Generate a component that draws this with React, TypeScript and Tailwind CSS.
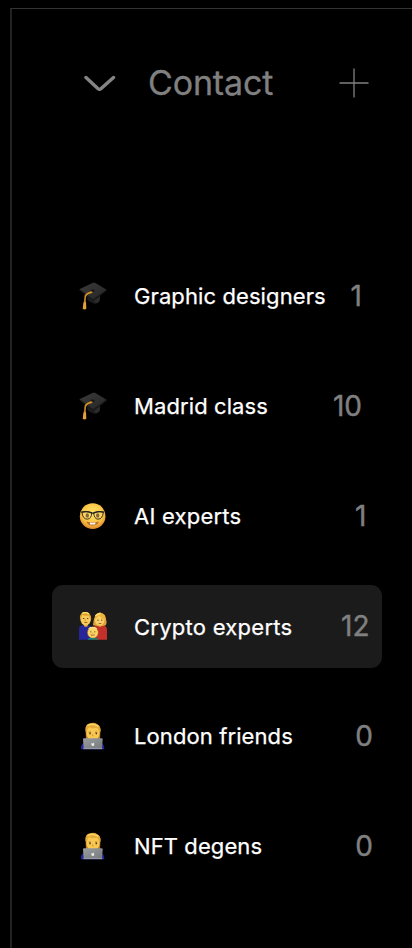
import type { ReactNode } from 'react';

function Emoji({ children }: { children: ReactNode }) {
  return (
    <svg viewBox="27 22.5 84 84" className="ml-[27px] size-7 shrink-0">
      {children}
    </svg>
  );
}

function GraduationCap() {
  return (
    <Emoji>
      <defs>
        <linearGradient id="board" x1="0" y1="0" x2="1" y2="1">
          <stop offset="0" stopColor="#3b3b3b" />
          <stop offset="1" stopColor="#252525" />
        </linearGradient>
      </defs>
      <path d="M52 62 L91 57 L90 76 Q86 90 72 87 Q59 84 52 76Z" fill="#1d1d1d" />
      <path d="M72 77 L90 66 L89 77 Q84 87 76 85Z" fill="#2c2c2c" />
      <path d="M28 44 L69 25 Q72 24 75 25 L110 46 L73 74 Q70 76 67 74Z" fill="url(#board)" />
      <path d="M28 44 L69 74 L110 46 L110 49 L72 79 L67 78 L28 47Z" fill="#191919" />
      <ellipse cx="68" cy="49" rx="6" ry="4" fill="#171717" />
      <path d="M67 53 Q50 55 46 65 L44 86" fill="none" stroke="#c88923" strokeWidth="5" />
      <path d="M64 54 Q50 57 48 66" fill="none" stroke="#efb44a" strokeWidth="2" strokeDasharray="3 2" />
      <path d="M41 82 H48 L49 103 Q43 107 38 103Z" fill="#dc9430" />
      <path d="M42 86 L41 103 M46 86 V104" stroke="#f6bd55" strokeWidth="1.5" />
    </Emoji>
  );
}

function NerdFace() {
  return (
    <Emoji>
      <defs>
        <radialGradient id="nerd" cx=".5" cy=".38" r=".64">
          <stop offset="0" stopColor="#ffe465" />
          <stop offset=".65" stopColor="#f8c346" />
          <stop offset="1" stopColor="#dc8126" />
        </radialGradient>
      </defs>
      <ellipse cx="68" cy="65" rx="38.5" ry="38.5" fill="url(#nerd)" />
      <ellipse cx="52" cy="63" rx="5" ry="7" fill="#70431b" />
      <ellipse cx="83" cy="63" rx="5" ry="7" fill="#70431b" />
      <path d="M36 53 Q51 49 65 54 Q65 73 52 74 Q38 74 36 53Z M71 54 Q86 49 100 53 Q98 74 84 74 Q72 73 71 54Z" fill="#fff6b7" fillOpacity=".2" stroke="#3b321c" strokeWidth="3" />
      <path d="M33 53 Q50 49 64 55 Q68 57 73 55 Q87 49 103 53" fill="none" stroke="#24231b" strokeWidth="4" />
      <path d="M49 81 Q68 87 87 81 Q83 93 68 93 Q53 93 49 81Z" fill="#bd6a2a" />
      <path d="M60 84 Q68 86 76 84 V89 Q72 91 68 90 Q64 91 60 89Z" fill="#fff" />
      <path d="M68 84 V90" stroke="#cbc4b7" />
    </Emoji>
  );
}

function Family() {
  return (
    <Emoji>
      <path d="M27 106 V72 Q28 62 39 62 H55 Q65 64 67 75 V106Z" fill="#27259a" />
      <path d="M67 106 V72 Q72 62 82 62 H99 Q110 63 111 74 V106Z" fill="#c4312b" />
      <path d="M42 56 H53 V65 Q47 69 42 65Z" fill="#dda637" />
      <path d="M84 55 H96 V64 Q90 70 84 64Z" fill="#dda637" />
      <path d="M69 62 Q72 25 89 24 Q108 25 109 49 Q112 61 103 64 Q90 67 69 62Z" fill="#e0a23a" />
      <ellipse cx="47" cy="43" rx="16" ry="20" fill="#f7cb59" />
      <path d="M30 43 Q28 25 43 23 Q61 21 64 43 L61 44 Q58 34 55 32 Q44 36 36 31 L34 43Z" fill="#dea02c" />
      <path d="M36 27 Q46 21 57 28" fill="none" stroke="#ffe064" strokeWidth="4" />
      <ellipse cx="89" cy="47" rx="14" ry="16" fill="#f9d267" />
      <path d="M73 46 Q81 44 87 32 Q93 44 106 47 L104 32 Q90 20 78 32Z" fill="#edb73c" />
      <path d="M76 34 Q84 26 92 27" fill="none" stroke="#ffe477" strokeWidth="4" />
      <path d="M39 42 H43 M51 42 H55 M82 47 H86 M93 47 H97" stroke="#5b3a1c" strokeWidth="3" />
      <path d="M46 43 L45 49 H49" fill="none" stroke="#cb8d35" strokeWidth="2" />
      <path d="M43 54 H52 M86 57 H94" stroke="#9f492e" strokeWidth="2.5" />
      <path d="M53 106 Q54 100 63 99 H76 Q84 100 85 106Z" fill="#168274" />
      <ellipse cx="68.5" cy="84" rx="17" ry="17" fill="#c28127" />
      <ellipse cx="68.5" cy="84" rx="15" ry="16" fill="#fad567" />
      <path d="M56 73 Q67 65 80 73" fill="none" stroke="#ffe382" strokeWidth="4" />
      <path d="M61 82 H64 M73 82 H76" stroke="#67401d" strokeWidth="3" />
      <path d="M68 84 L67 87 H70" fill="none" stroke="#ca8b35" strokeWidth="1.5" />
      <path d="M62 91 Q68 94 74 91" fill="none" stroke="#a44b2a" strokeWidth="2.5" />
    </Emoji>
  );
}

function Technologist() {
  return (
    <Emoji>
      <defs>
        <linearGradient id="laptop" x1="0" y1="0" x2="1" y2="1">
          <stop offset="0" stopColor="#999da0" />
          <stop offset="1" stopColor="#777b7e" />
        </linearGradient>
      </defs>
      <path d="M33 104 V96 Q35 87 43 84 H93 Q102 88 103 104Z" fill="#24269c" />
      <path d="M47 53 Q44 29 59 27 Q71 22 82 29 Q94 36 91 55 L90 75 H48Z" fill="#bc7e23" />
      <ellipse cx="69" cy="55" rx="20" ry="24" fill="#f8c851" />
      <path d="M47 51 Q44 32 57 28 Q69 22 81 29 Q94 35 91 52 L87 50 Q86 42 79 40 Q64 43 57 38 Q52 42 51 51Z" fill="#e5ac3a" />
      <path d="M53 33 Q69 25 85 36" fill="none" stroke="#ffd766" strokeWidth="4" />
      <path d="M56 53 H63 M75 53 H82" stroke="#795023" strokeWidth="2" />
      <path d="M58 57 H62 M77 57 H81" stroke="#3e2d1b" strokeWidth="4" />
      <path d="M68 59 L67 64 H71" fill="none" stroke="#c98b32" strokeWidth="2" />
      <path d="M39 74 Q39 71 42 71 H95 Q98 71 98 74 L96 101 H41Z" fill="url(#laptop)" />
      <path d="M40 101 H97 V104 H40Z" fill="#a8abad" />
      <path d="M69 87 Q64 83 64 89 Q65 95 68 94 Q72 95 73 91 Q70 88 73 86 Q71 84 69 87Z" fill="#eeeeef" />
      <path d="M69 85 Q69 82 71 82 Q71 84 69 85" fill="#eeeeef" />
    </Emoji>
  );
}

const groups = [
  { name: 'Graphic designers', count: 1, icon: <GraduationCap />, inset: 'pr-[19.5px]', spacing: 'tracking-[0.1px]' },
  { name: 'Madrid class', count: 10, icon: <GraduationCap />, inset: 'pr-[19.5px]', spacing: 'tracking-[0.1px]' },
  { name: 'AI experts', count: 1, icon: <NerdFace />, inset: 'pr-[15px]', spacing: 'tracking-[0.22px]' },
  { name: 'Crypto experts', count: 12, icon: <Family />, inset: 'pr-[12px]', spacing: 'tracking-[0.26px] pt-0.5', active: true },
  { name: 'London friends', count: 0, icon: <Technologist />, inset: 'pr-[8.5px]', spacing: 'tracking-[0.1px]' },
  { name: 'NFT degens', count: 0, icon: <Technologist />, inset: 'pr-[8.5px]', spacing: 'tracking-[0.1px]' },
];

export default function App() {
  return (
    <div className="h-[948px] w-[412px] overflow-hidden bg-black pl-[10px] pt-2 font-['Inter',sans-serif]">
      <main className="h-[940px] border-l-2 border-t border-l-[#222] border-t-[#333]">
        <header className="flex h-[148px] items-center pl-[72px]">
          <svg className="h-5 w-8 shrink-0" viewBox="0 0 32 20" fill="none" stroke="#858585" strokeWidth="3.4" strokeLinecap="round" strokeLinejoin="round">
            <path d="M2 4.5 L13.8 15.5 Q15.5 17 17.2 15.5 L29.5 4.5" />
          </svg>
          <h1 className="ml-8 w-[191px] text-[34px] leading-10 tracking-[-0.15px] text-[#808080] [-webkit-text-stroke:0.3px_#808080]">Contact</h1>
          <svg className="size-[30px] shrink-0" viewBox="0 0 30 30" fill="none" stroke="#808080" strokeWidth="1.3">
            <path d="M.5 15 H29.5 M15 .5 V29.5" />
          </svg>
        </header>
        <ul className="ml-[39.5px] mt-[98px] flex w-[330px] flex-col gap-[27.5px]">
          {groups.map((group) => (
            <li key={group.name} className={`flex h-[82.5px] items-center rounded-[11px] ${group.inset} ${group.active ? 'bg-[#1b1b1b]' : ''}`}>
              {group.icon}
              <span className={`ml-[27.5px] whitespace-nowrap text-[22px] leading-7 text-white [-webkit-text-stroke:0.25px_white] ${group.spacing}`}>{group.name}</span>
              <span className="ml-auto text-[28px] leading-8 text-[#808080] [-webkit-text-stroke:0.4px_#808080]">{group.count}</span>
            </li>
          ))}
        </ul>
      </main>
    </div>
  );
}
